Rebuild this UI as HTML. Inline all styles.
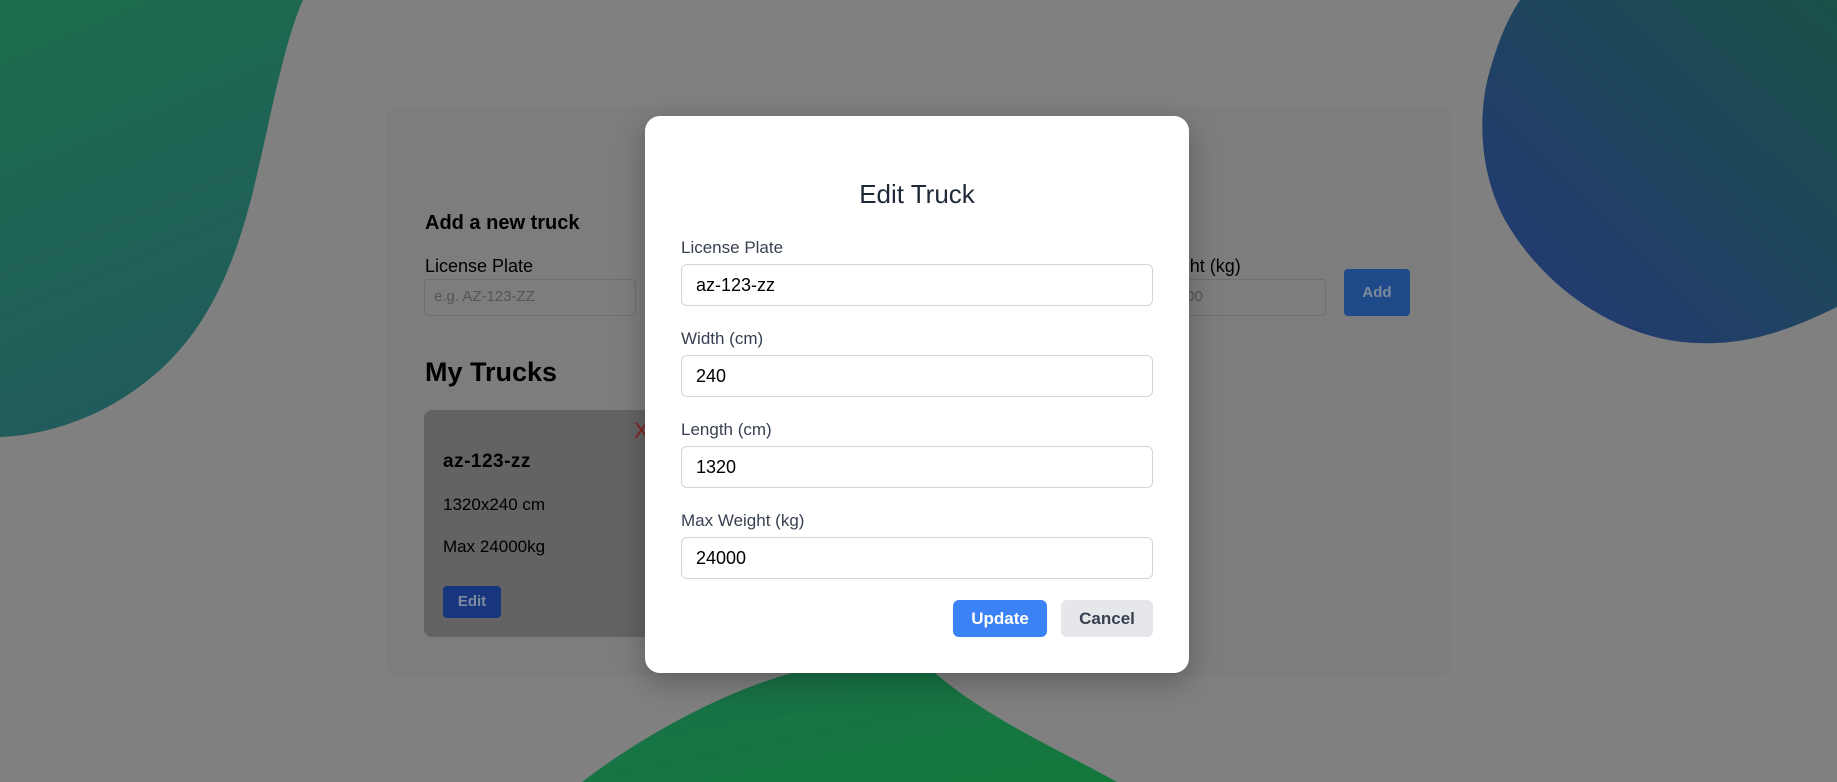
<!DOCTYPE html>
<html><head><meta charset="utf-8"><style>
*{box-sizing:border-box;margin:0;padding:0}
body{width:1837px;height:782px;overflow:hidden;background:#808080;position:relative;font-family:"Liberation Sans",Arial,sans-serif}
.abs{position:absolute}
.card{left:389px;top:110px;width:1058px;height:562px;background:#7d7d7d;box-shadow:0 0 6px rgba(0,0,0,0.08);border-radius:4px}
.t{color:#000;position:absolute;white-space:nowrap}
.inp{position:absolute;border:1px solid #6e6e6e;border-radius:4px;height:37px}
.modal{left:645px;top:116px;width:544px;height:557px;background:#fff;border-radius:15px;box-shadow:0 10px 30px rgba(0,0,0,0.25)}
.lab{position:absolute;left:36px;font-size:17px;color:#374151}
.fi{position:absolute;left:36px;width:472px;height:42px;border:1px solid #d1d5db;border-radius:6px;font-size:18px;color:#000;padding:10px 0 0 14px}
.btn{position:absolute;top:484px;height:37px;border-radius:6px;font-weight:bold;font-size:17px;text-align:center;line-height:37px}
</style></head><body>
<svg class="abs" style="left:0;top:0" width="1837" height="782">
<defs>
<linearGradient id="g1" x1="0" y1="0" x2="0.3" y2="1"><stop offset="0" stop-color="#1c6e4c"/><stop offset="1" stop-color="#215a5c"/></linearGradient>
<linearGradient id="g2" x1="1" y1="0" x2="0" y2="1"><stop offset="0" stop-color="#1b5148"/><stop offset="1" stop-color="#233678"/></linearGradient>
<linearGradient id="g3" x1="0" y1="0" x2="1" y2="1"><stop offset="0" stop-color="#19704a"/><stop offset="1" stop-color="#14793b"/></linearGradient>
</defs>
<path d="M0 0 L303 0 C285 40 272 110 258 170 C240 250 215 320 160 370 C110 415 50 435 0 437 Z" fill="url(#g1)"/>
<path d="M1520 0 L1837 0 L1837 307 C1780 335 1740 345 1696 343 C1620 340 1545 290 1505 220 C1478 170 1478 110 1490 70 C1500 35 1510 15 1520 0 Z" fill="url(#g2)"/>
<path d="M582 782 C650 730 730 690 792 673 L935 673 C990 720 1060 750 1117 782 Z" fill="url(#g3)"/>
</svg>
<div class="abs card"></div>
<div class="t" style="left:425px;top:212px;font-size:20px;font-weight:bold">Add a new truck</div>
<div class="t" style="left:425px;top:256px;font-size:18px">License Plate</div>
<div class="inp" style="left:424px;top:279px;width:212px"></div>
<div class="t" style="left:434px;top:288px;font-size:15px;color:#555">e.g. AZ-123-ZZ</div>
<div class="t" style="left:1110px;top:256px;font-size:18px">Max Weight (kg)</div>
<div class="inp" style="left:1120px;top:279px;width:206px"></div>
<div class="t" style="left:1132px;top:288px;font-size:15px;color:#555">e.g. 24000</div>
<div class="abs" style="left:1344px;top:269px;width:66px;height:47px;background:#1e4a8a;border-radius:4px;color:#7f8a9a;font-weight:bold;font-size:15px;text-align:center;line-height:47px">Add</div>
<div class="t" style="left:425px;top:357px;font-size:27px;font-weight:bold">My Trucks</div>
<div class="abs" style="left:424px;top:410px;width:240px;height:227px;background:#636363;border-radius:8px"></div>
<div class="t" style="left:634px;top:418px;font-size:22px;color:#8a2020">X</div>
<div class="t" style="left:443px;top:451px;font-size:19px;font-weight:bold;letter-spacing:0.5px">az-123-zz</div>
<div class="t" style="left:443px;top:495px;font-size:17px">1320x240 cm</div>
<div class="t" style="left:443px;top:537px;font-size:17px">Max 24000kg</div>
<div class="abs" style="left:443px;top:586px;width:58px;height:32px;background:#17367d;border-radius:4px;color:#7f8aa0;font-weight:bold;font-size:15px;text-align:center;line-height:32px">Edit</div>
<div class="abs modal">
<div style="position:absolute;top:63px;width:100%;text-align:center;font-size:26px;color:#1f2937">Edit Truck</div>
<div class="lab" style="top:122px">License Plate</div>
<div class="fi" style="top:148px">az-123-zz</div>
<div class="lab" style="top:213px">Width (cm)</div>
<div class="fi" style="top:239px">240</div>
<div class="lab" style="top:304px">Length (cm)</div>
<div class="fi" style="top:330px">1320</div>
<div class="lab" style="top:395px">Max Weight (kg)</div>
<div class="fi" style="top:421px">24000</div>
<div class="btn" style="left:308px;width:94px;background:#3b82f6;color:#fff">Update</div>
<div class="btn" style="left:416px;width:92px;background:#e5e7eb;color:#374151">Cancel</div>
</div>
</body></html>
